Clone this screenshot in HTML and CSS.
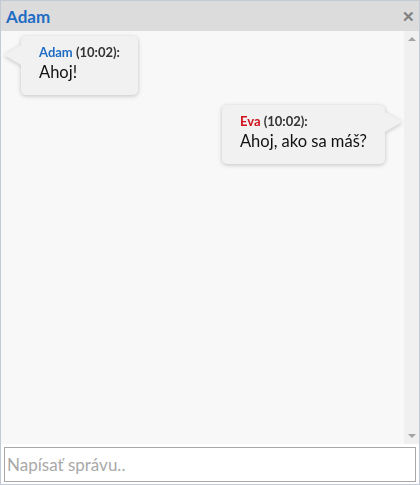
FILE: index.html
```html
<html lang="sk">
<head>
    <meta charset="utf-8">
    <link rel="stylesheet" href="styles.css">
</head>
<body>
<div class="chat">
    <div class="chat-head">
        <span class="chat-title">Adam</span>
        <span class="chat-close">&#x2715;</span>
    </div>

    <div class="chat-body">
        <div class="chat-messages">
            <div class="msg msg-left">
                <div class="msg-meta"><span class="name-adam">Adam</span> (10:02):</div>
                <div class="msg-text">Ahoj!</div>
            </div>
            <div class="msg msg-right">
                <div class="msg-meta"><span class="name-eva">Eva</span> (10:02):</div>
                <div class="msg-text">Ahoj, ako sa máš?</div>
            </div>
        </div>
        <!-- drawn scrollbar, the real one is hidden in headless -->
        <div class="scrollbar">
            <span class="arrow arrow-up"></span>
            <span class="arrow arrow-down"></span>
        </div>
    </div>

    <div class="chat-foot">
        <input class="chat-input" type="text" placeholder="Napísať správu..">
    </div>
</div>
</body>
</html>
```

FILE: styles.css
```css
html, body {
    margin: 0;
    padding: 0;
}

body {
    font-family: "Lato", sans-serif;
}

.chat {
    width: 420px;
    height: 485px;
    box-sizing: border-box;
    border: 1px solid #c4c9d6;
    display: flex;
    flex-direction: column;
    background-color: #f8f8f8;
}

.chat-head {
    height: 30px;
    flex: none;
    display: flex;
    align-items: center;
    justify-content: space-between;
    padding: 0 4px 0 5px;
    background-color: #dcdcdc;
}

.chat-title {
    color: #1f6cc4;
    font-weight: bold;
    font-size: 17px;
}

.chat-close {
    color: #808080;
    font-size: 15px;
    font-weight: bold;
}

.chat-body {
    flex: 1;
    display: flex;
    min-height: 0;
}

.chat-messages {
    flex: 1;
    padding: 5px 0;
    display: flex;
    flex-direction: column;
    align-items: flex-start;
    gap: 9px;
}

.scrollbar {
    width: 15px;
    flex: none;
    background-color: #f0f0f0;
    display: flex;
    flex-direction: column;
    justify-content: space-between;
    align-items: center;
    padding: 6px 0;
}

.arrow {
    width: 0;
    height: 0;
    border-left: 4px solid transparent;
    border-right: 4px solid transparent;
}

.arrow-up {
    border-bottom: 4px solid #a3a3a3;
}

.arrow-down {
    border-top: 4px solid #a3a3a3;
}

.msg {
    position: relative;
    background-color: #f1f1f1;
    border-radius: 5px;
    padding: 8px 18px 11px 18px;
    filter: drop-shadow(0 1px 2px rgba(0, 0, 0, 0.22));
}

.msg::before {
    content: "";
    position: absolute;
    top: 9px;
    border-top: 10px solid transparent;
    border-bottom: 10px solid transparent;
}

.msg-left {
    margin-left: 20px;
}

.msg-left::before {
    left: -17px;
    border-right: 17px solid #f1f1f1;
}

.msg-right {
    align-self: flex-end;
    margin-right: 19px;
    margin-top: 1px;
}

.msg-right::before {
    top: 7px;
    right: -17px;
    border-left: 17px solid #f1f1f1;
}

.msg-meta {
    font-size: 13px;
    font-weight: bold;
    color: #333;
    line-height: 16px;
}

.name-adam {
    color: #1f6cc4;
}

.name-eva {
    color: #d0101a;
}

.msg-text {
    font-size: 16.5px;
    color: #111;
    line-height: 24px;
}

.chat-foot {
    flex: none;
    padding: 3px 3px 2px 3px;
    background-color: #fff;
}

.chat-input {
    width: 100%;
    height: 35px;
    box-sizing: border-box;
    border: 1px solid #a8a8a8;
    padding: 0 2px;
    font-family: "Lato", sans-serif;
    font-size: 17px;
    outline: none;
}

.chat-input::placeholder {
    color: #a9a9a9;
}
```
